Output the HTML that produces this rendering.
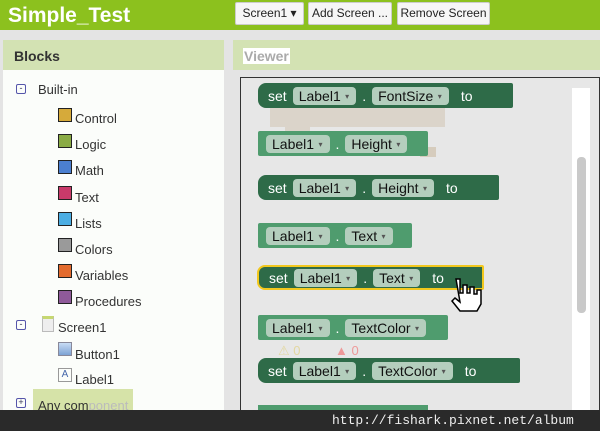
<!DOCTYPE html><html><head><style>
*{margin:0;padding:0;box-sizing:border-box}
body{width:600px;height:431px;overflow:hidden;position:relative;background:#e4e4e4;font-family:"Liberation Sans",sans-serif}
.a{position:absolute;white-space:nowrap}
.top{left:0;top:0;width:600px;height:30px;background:#8cc11e}
.title{left:8px;top:4px;color:#fff;font-size:21px;font-weight:bold}
.btn{top:2px;height:23px;background:#f6f6f6;border:1px solid #ccc;border-radius:2px;font-size:12px;color:#222;line-height:21px;text-align:center}
.ph{height:30px;background:#d3e2b3;top:40px}
.tree{font-size:13px;color:#333}
.ic{width:14px;height:14px;border:1.5px solid #222}
.blk{height:25px;border-radius:8px 2px 2px 8px;display:flex;align-items:center;color:#fff;font-size:14px;padding-left:10px;gap:6px}
.s{background:#2e6b48}
.g{background:#4f9c6e;border-radius:2px;padding-left:8px}
.p{background:#b4cebd;color:#111;border-radius:4px;height:18px;line-height:18px;padding:0 7px 0 6px;font-size:14px}
.p:after{content:"  ▾";white-space:pre;font-size:8px;color:#555;vertical-align:2px}
.d{color:#fff}
</style></head><body>
<div class="a top"></div>
<div class="a title">Simple_Test</div>
<div class="a btn" style="left:235px;width:69px">Screen1 ▾</div>
<div class="a btn" style="left:308px;width:84px">Add Screen ...</div>
<div class="a btn" style="left:397px;width:93px">Remove Screen</div>

<div class="a ph" style="left:3px;width:221px"></div>
<div class="a" style="left:14px;top:48px;font-size:14px;font-weight:bold;color:#333">Blocks</div>
<div class="a" style="left:3px;top:70px;width:221px;height:361px;background:#fbfdfa"></div>

<div class="a ph" style="left:233px;width:367px"></div>
<div class="a" style="left:243px;top:48px;font-size:14px;font-weight:bold;color:#aaa;background:#fff;padding:0 1px">Viewer</div>
<div class="a" style="left:240px;top:77px;width:360px;height:354px;border:1.5px solid #333;background:#e7e7e7"></div>
<div class="a" style="left:572px;top:88px;width:18px;height:330px;background:#fff"></div>
<div class="a" style="left:577px;top:157px;width:9px;height:156px;background:#c9c9c9;border-radius:4px"></div>

<div class="a tree" style="left:0;top:0">
<div class="a" style="left:16px;top:84px;width:10px;height:10px;border:1px solid #55a;border-radius:2px;font-size:9px;line-height:7px;text-align:center;color:#335">-</div>
<div class="a" style="left:38px;top:82px">Built-in</div>
<div class="a ic" style="left:58px;top:108px;background:#d6aa3a"></div><div class="a" style="left:75px;top:111px">Control</div>
<div class="a ic" style="left:58px;top:134px;background:#8aab45"></div><div class="a" style="left:75px;top:137px">Logic</div>
<div class="a ic" style="left:58px;top:160px;background:#4b7fd0"></div><div class="a" style="left:75px;top:163px">Math</div>
<div class="a ic" style="left:58px;top:186px;background:#c93a6a"></div><div class="a" style="left:75px;top:190px">Text</div>
<div class="a ic" style="left:58px;top:212px;background:#4caee3"></div><div class="a" style="left:75px;top:216px">Lists</div>
<div class="a ic" style="left:58px;top:238px;background:#9a9a9a"></div><div class="a" style="left:75px;top:242px">Colors</div>
<div class="a ic" style="left:58px;top:264px;background:#e36b2e"></div><div class="a" style="left:75px;top:268px">Variables</div>
<div class="a ic" style="left:58px;top:290px;background:#8f5a9a"></div><div class="a" style="left:75px;top:294px">Procedures</div>
<div class="a" style="left:16px;top:320px;width:10px;height:10px;border:1px solid #55a;border-radius:2px;font-size:9px;line-height:7px;text-align:center;color:#335">-</div>
<div class="a" style="left:42px;top:316px;width:12px;height:16px;background:#eee;border:1px solid #bbb;border-top:3px solid #c6d870"></div><div class="a" style="left:58px;top:320px">Screen1</div>
<div class="a" style="left:58px;top:342px;width:14px;height:14px;background:linear-gradient(#c8dcf4,#7da3d4);border:1px solid #889"></div><div class="a" style="left:75px;top:347px">Button1</div>
<div class="a" style="left:58px;top:368px;width:14px;height:14px;border:1px solid #999;font-size:10px;color:#46a;text-align:center;line-height:12px">A</div><div class="a" style="left:75px;top:372px">Label1</div>
<div class="a" style="left:33px;top:389px;width:100px;height:21px;background:#d6e3a8"></div>
<div class="a" style="left:16px;top:398px;width:10px;height:10px;border:1px solid #55a;border-radius:2px;font-size:9px;line-height:7px;text-align:center;color:#335">+</div>
<div class="a" style="left:38px;top:398px">Any com<span style="color:#bbb">ponent</span></div>
</div>

<div class="a" style="left:270px;top:105px;width:175px;height:22px;background:#d6ccbd;opacity:.7"></div>
<div class="a" style="left:285px;top:127px;width:25px;height:18px;background:#d6ccbd;opacity:.7"></div>
<div class="a" style="left:420px;top:147px;width:16px;height:10px;background:#d6ccbd"></div>

<div class="a blk s" style="left:258px;top:83px;width:255px"><span>set</span><span class="p">Label1</span><span class="d">.</span><span class="p">FontSize</span><span style="margin-left:6px">to</span></div>
<div class="a blk g" style="left:258px;top:131px;width:170px"><span class="p">Label1</span><span class="d">.</span><span class="p">Height</span></div>
<div class="a blk s" style="left:258px;top:175px;width:241px"><span>set</span><span class="p">Label1</span><span class="d">.</span><span class="p">Height</span><span style="margin-left:6px">to</span></div>
<div class="a blk g" style="left:258px;top:223px;width:154px"><span class="p">Label1</span><span class="d">.</span><span class="p">Text</span></div>
<div class="a blk s" style="left:257px;top:265px;width:227px;border:2px solid #f2c81d"><span>set</span><span class="p">Label1</span><span class="d">.</span><span class="p">Text</span><span style="margin-left:6px">to</span></div>
<svg class="a" style="left:448px;top:275px" width="36" height="40" viewBox="0 0 36 40"><path d="M8 4h4v14h3V10h4v8h3v-6h4v7h3v-4h4v14l-4 7H12l-8-10 3-3 5 4z" fill="#fff" stroke="#000" stroke-width="1.5"/></svg>
<div class="a blk g" style="left:258px;top:315px;width:190px"><span class="p">Label1</span><span class="d">.</span><span class="p">TextColor</span></div>
<div class="a" style="left:278px;top:343px;font-size:13px;color:#e2d7a0">⚠ 0</div>
<div class="a" style="left:335px;top:343px;font-size:13px;color:#e99">▲ 0</div>
<div class="a blk s" style="left:258px;top:358px;width:262px"><span>set</span><span class="p">Label1</span><span class="d">.</span><span class="p">TextColor</span><span style="margin-left:6px">to</span></div>
<div class="a" style="left:258px;top:405px;width:170px;height:10px;background:#4f9c6e"></div>

<div class="a" style="left:0;top:410px;width:600px;height:21px;background:#2a2a2a"></div>
<div class="a" style="left:332px;top:413px;font-family:'Liberation Mono',monospace;font-size:13px;color:#eee">http://fishark.pixnet.net/album</div>
</body></html>
